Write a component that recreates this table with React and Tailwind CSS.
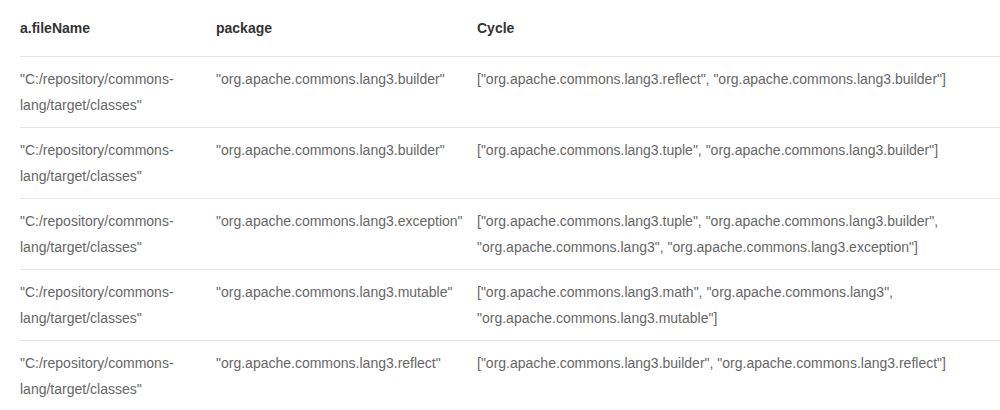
import React from 'react';

const rows = [
  {
    file: '"C:/repository/commons-lang/target/classes"',
    pkg: '"org.apache.commons.lang3.builder"',
    cycle: '["org.apache.commons.lang3.reflect", "org.apache.commons.lang3.builder"]',
  },
  {
    file: '"C:/repository/commons-lang/target/classes"',
    pkg: '"org.apache.commons.lang3.builder"',
    cycle: '["org.apache.commons.lang3.tuple", "org.apache.commons.lang3.builder"]',
  },
  {
    file: '"C:/repository/commons-lang/target/classes"',
    pkg: '"org.apache.commons.lang3.exception"',
    cycle: '["org.apache.commons.lang3.tuple", "org.apache.commons.lang3.builder", "org.apache.commons.lang3", "org.apache.commons.lang3.exception"]',
  },
  {
    file: '"C:/repository/commons-lang/target/classes"',
    pkg: '"org.apache.commons.lang3.mutable"',
    cycle: '["org.apache.commons.lang3.math", "org.apache.commons.lang3", "org.apache.commons.lang3.mutable"]',
  },
  {
    file: '"C:/repository/commons-lang/target/classes"',
    pkg: '"org.apache.commons.lang3.reflect"',
    cycle: '["org.apache.commons.lang3.builder", "org.apache.commons.lang3.reflect"]',
  },
];

export default function App() {
  return (
    <div className="h-[410px] w-[1000px] overflow-hidden bg-white pl-5 font-['Liberation_Sans',Arial,sans-serif] text-[14px] leading-[26px]">
      <div className="grid grid-cols-[196px_261px_1fr] border-b border-[#e8e8e8] py-[15px] font-bold text-[#333]">
        <div>a.fileName</div>
        <div>package</div>
        <div>Cycle</div>
      </div>
      {rows.map((r, i) => (
        <div key={i} className="grid grid-cols-[196px_261px_1fr] border-b border-[#e8e8e8] pt-[9px] pb-[9px] text-[#666] min-h-[71px]">
          <div className="pr-5">{r.file}</div>
          <div className="pr-2">{r.pkg}</div>
          <div className="pr-[50px]">{r.cycle}</div>
        </div>
      ))}
    </div>
  );
}
